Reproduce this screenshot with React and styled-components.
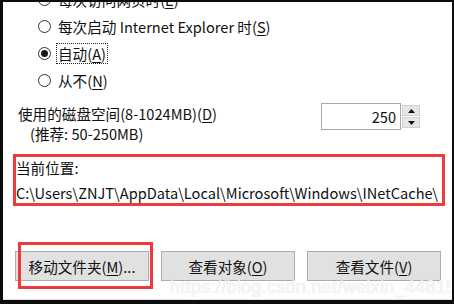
import React from "react";
import styled, { createGlobalStyle } from "styled-components";

const Global = createGlobalStyle`
  html, body { margin: 0; padding: 0; background: #0c0c0c; }
  body { width: 454px; height: 304px; overflow: hidden; }
  * { box-sizing: border-box; }
`;

const Frame = styled.div`
  width: 454px;
  height: 304px;
  background: #0c0c0c;
  padding: 2px 2px 4px 3px;
`;

const Panel = styled.div`
  position: relative;
  width: 100%;
  height: 100%;
  background: #fff;
  overflow: hidden;
  font-family: "Noto Sans CJK SC", "Noto Sans", sans-serif;
  font-size: 14.6px;
  color: #111;
  display: flex;
  flex-direction: column;
  border-bottom: 1px solid #e2e2e2;
`;

const RadioList = styled.div`
  display: flex;
  flex-direction: column;
  margin-top: -16px;
  padding-left: 35px;
`;

const RadioRow = styled.div`
  height: 27px;
  display: flex;
  align-items: center;
  gap: 6px;
`;

const Circle = styled.span`
  width: 13px;
  height: 13px;
  border-radius: 50%;
  border: 1px solid #333;
  display: flex;
  align-items: center;
  justify-content: center;
  flex: none;
  &::after {
    content: "";
    width: 7px;
    height: 7px;
    border-radius: 50%;
    background: ${(p) => (p.$checked ? "#1a1a1a" : "transparent")};
  }
`;

const Label = styled.span`
  line-height: 19px;
  padding: 0 1px;
  white-space: nowrap;
  outline: ${(p) => (p.$focus ? "1px dotted #222" : "none")};
  outline-offset: 0;
`;

const U = styled.span`
  text-decoration: underline;
  text-underline-offset: 2px;
`;

const DiskRow = styled.div`
  display: flex;
  justify-content: space-between;
  align-items: flex-start;
  margin-top: 10px;
  padding-left: 15px;
  padding-right: 32px;
`;

const DiskText = styled.div`
  display: flex;
  flex-direction: column;
  align-items: flex-start;
  line-height: 20px;
  white-space: nowrap;
`;

const DiskLine = styled.div`
  margin-left: ${(p) => (p.$indent ? "12px" : "0")};
`;

const Spin = styled.div`
  display: flex;
  align-items: center;
  gap: 1px;
  margin-top: -1px;
`;

const SpinInput = styled.div`
  width: 80px;
  height: 27px;
  border: 1px solid #a9a9a9;
  display: flex;
  align-items: center;
  justify-content: flex-end;
  padding-right: 4px;
`;

const SpinButtons = styled.div`
  display: flex;
  flex-direction: column;
  gap: 1px;
`;

const SpinBtn = styled.div`
  width: 18px;
  height: 11px;
  background: #e6e6e6;
  border: 1px solid #d0d0d0;
  display: flex;
  align-items: center;
  justify-content: center;
`;

const Location = styled.div`
  margin: 10px 7px 0 10px;
  height: 52px;
  border: 3px solid #ee3a3d;
  display: flex;
  flex-direction: column;
  justify-content: center;
  line-height: 25px;
  white-space: nowrap;
`;

const ButtonBar = styled.div`
  margin-top: 45px;
  padding-left: 12px;
  display: flex;
  gap: 12px;
`;

const BtnWrap = styled.div`
  position: relative;
`;

const Button = styled.div`
  width: 134px;
  height: 30px;
  background: #e1e1e1;
  border: 1px solid #adadad;
  display: flex;
  align-items: center;
  justify-content: center;
  white-space: nowrap;
`;

const Highlight = styled.div`
  position: absolute;
  left: 3px;
  top: -9px;
  width: 135px;
  height: 47px;
  border: 3px solid #ee3a3d;
  pointer-events: none;
`;

const Watermark = styled.div`
  position: absolute;
  left: 167px;
  top: 275px;
  font-family: "Liberation Sans", Arial, sans-serif;
  font-size: 18px;
  letter-spacing: 0.3px;
  color: rgba(250, 250, 250, 0.92);
  text-shadow: 0 0 1px rgba(150, 150, 150, 0.4);
  white-space: nowrap;
  pointer-events: none;
`;

const Tri = ({ up }) => (
  <svg width="7" height="4" viewBox="0 0 7 4">
    <polygon points={up ? "0,4 7,4 3.5,0" : "0,0 7,0 3.5,4"} fill="#111" />
  </svg>
);

const radios = [
  { text: <>每次访问网页时(<U>E</U>)</> },
  { text: <>每次启动 Internet Explorer 时(<U>S</U>)</> },
  { text: <>自动(<U>A</U>)</>, checked: true, focus: true },
  { text: <>从不(<U>N</U>)</> },
];

export default function App() {
  return (
    <>
      <Global />
      <Frame>
        <Panel>
          <RadioList>
            {radios.map((r, i) => (
              <RadioRow key={i}>
                <Circle $checked={r.checked} />
                <Label $focus={r.focus}>{r.text}</Label>
              </RadioRow>
            ))}
          </RadioList>
          <DiskRow>
            <DiskText>
              <DiskLine>使用的磁盘空间(8-1024MB)(<U>D</U>)</DiskLine>
              <DiskLine $indent>(推荐: 50-250MB)</DiskLine>
            </DiskText>
            <Spin>
              <SpinInput>250</SpinInput>
              <SpinButtons>
                <SpinBtn><Tri up /></SpinBtn>
                <SpinBtn><Tri /></SpinBtn>
              </SpinButtons>
            </Spin>
          </DiskRow>
          <Location>
            <span>当前位置:</span>
            <span>C:\Users\ZNJT\AppData\Local\Microsoft\Windows\INetCache\</span>
          </Location>
          <ButtonBar>
            <BtnWrap>
              <Button>移动文件夹(<U>M</U>)...</Button>
              <Highlight />
            </BtnWrap>
            <Button>查看对象(<U>O</U>)</Button>
            <Button>查看文件(<U>V</U>)</Button>
          </ButtonBar>
          <Watermark>https://blog.csdn.net/weixin_44815928</Watermark>
        </Panel>
      </Frame>
    </>
  );
}
